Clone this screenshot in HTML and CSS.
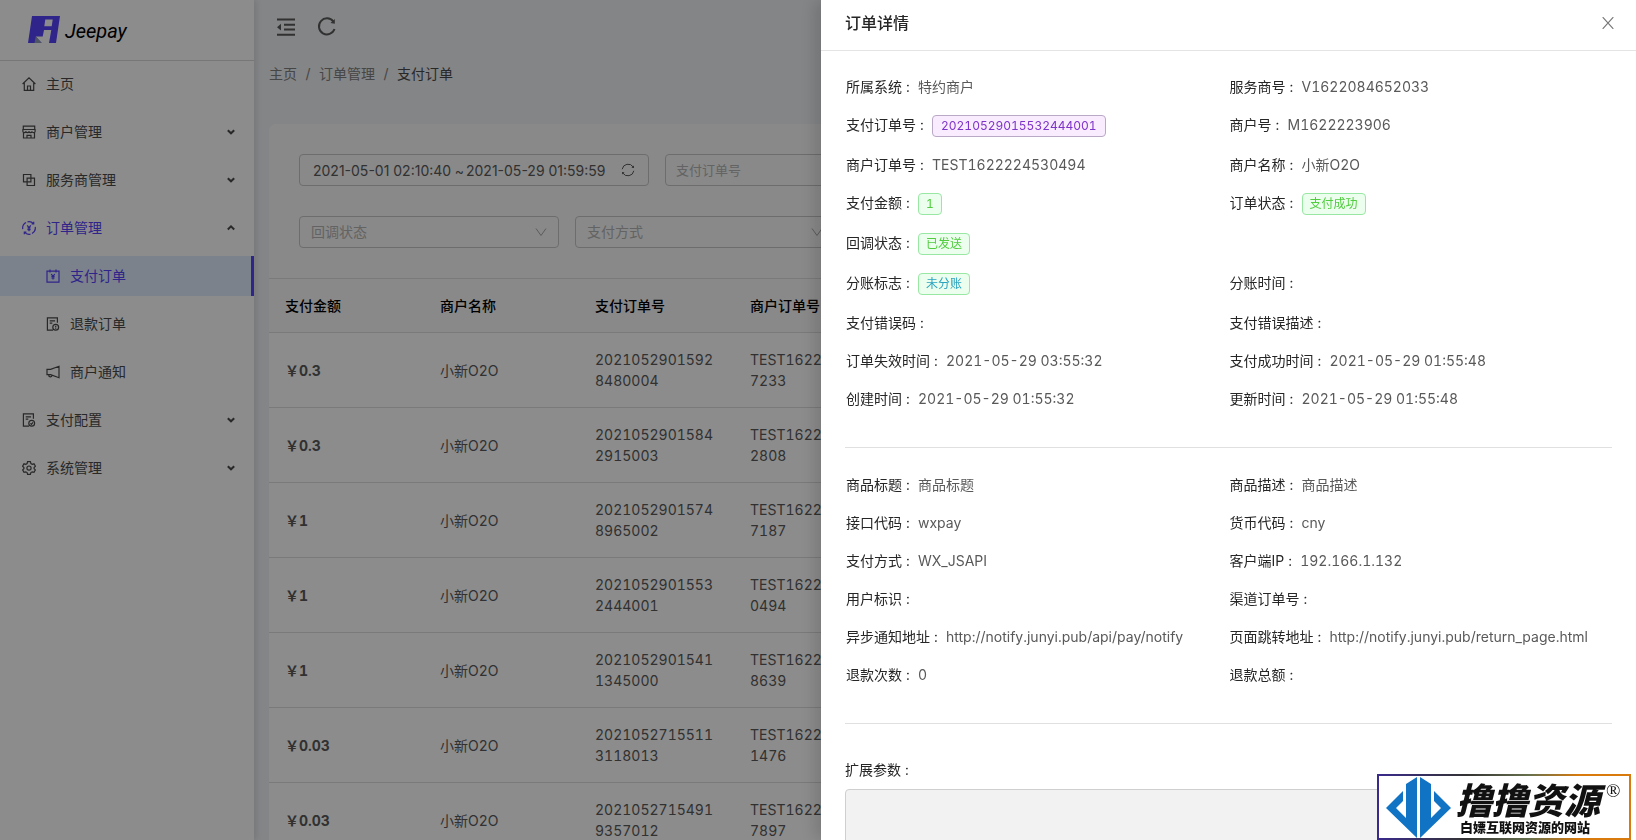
FILE: index.html
```html
<!DOCTYPE html>
<html lang="zh-CN">
<head>
<meta charset="utf-8">
<title>Jeepay</title>
<link rel="stylesheet" href="styles.css">
</head>
<body>
<div class="app">
  <aside class="sidebar">
    <a class="brand" href="#">
      <svg class="brand-mark" viewBox="0 0 32 27" aria-hidden="true">
        <path fill="#5742fa" fill-rule="evenodd" d="M4 0h28l-4 27h-7l2.300-13H16l-1.300 6.500h-7l6 6.500H0zM17.300 3.500l-1 6.700h7.400l1-6.700z"/>
        <path fill="#8f9bb5" d="M7.700 20.500l6 6.500H6.500z"/>
      </svg>
      <span class="brand-name">Jeepay</span>
    </a>
    <nav class="menu">
      <a class="menu-item" href="#">
        <svg class="icon" viewBox="0 0 14 14"><path d="M.6 7 7 .9 13.400 7M2.300 6v7.300h9.400V6M5.500 13V9h3v4"/></svg>
        <span class="menu-text">主页</span>
      </a>
      <a class="menu-item" href="#">
        <svg class="icon" viewBox="0 0 14 14"><path d="M1.300 1.200h11.400v3.300H1.300zM.9 4.500h12.200v2c0 1.600-2.700 1.600-3 0-.4 1.600-2.700 1.600-3.100 0-.4 1.600-2.700 1.600-3.100 0-.4 1.600-3 1.600-3 0zM1.500 8v5h11V8M5 13v-2.700h4V13"/></svg>
        <span class="menu-text">商户管理</span>
        <svg class="arrow" viewBox="0 0 8 6"><path d="m.8 1.200 3.200 3.100 3.200-3.100"/></svg>
      </a>
      <a class="menu-item" href="#">
        <svg class="icon" viewBox="0 0 14 14"><path d="M1.500 1.500h7.400v7.400H1.500zM5.100 5.100h7.400v7.400H5.100z"/></svg>
        <span class="menu-text">服务商管理</span>
        <svg class="arrow" viewBox="0 0 8 6"><path d="m.8 1.200 3.200 3.100 3.200-3.100"/></svg>
      </a>
      <a class="menu-item menu-item-open" href="#">
        <svg class="icon" viewBox="0 0 14 14"><path d="M.8 8.200A6.300 6.300 0 0 1 4 1.500M5.500.9a6.300 6.300 0 0 1 6 1.700M13.200 5.800A6.300 6.300 0 0 1 10 12.500M8.500 13.100a6.300 6.300 0 0 1-6-1.700M11.700.8v2H9.600M2.300 13.200v-2h2.100M5.200 4.300 7 6.700l1.800-2.400M7 6.700v3.500M5.400 7h3.200M5.400 8.600h3.200"/></svg>
        <span class="menu-text">订单管理</span>
        <svg class="arrow arrow-up" viewBox="0 0 8 6"><path d="M.8 4.500 4 1.400l3.200 3.100"/></svg>
      </a>
      <a class="menu-item menu-sub menu-item-active" href="#">
        <svg class="icon" viewBox="0 0 14 14"><path d="M1 2.200h12v10.900H1zM4 .6v3M10 .6v3M5.200 5l1.800 2.400L8.800 5M7 7.400v3.200M5.400 7.500h3.200M5.400 9h3.200"/></svg>
        <span class="menu-text">支付订单</span>
      </a>
      <a class="menu-item menu-sub" href="#">
        <svg class="icon" viewBox="0 0 14 14"><path d="M7 13.200H1.400V.8h10v5M3.700 3.800h5.400M3.700 6.200h2.600"/><circle cx="9.700" cy="10.300" r="2.900"/><path d="M9.700 8.700v1.900M9.700 11.200v.7"/></svg>
        <span class="menu-text">退款订单</span>
      </a>
      <a class="menu-item menu-sub" href="#">
        <svg class="icon" viewBox="0 0 14 14"><path d="M13 1.300v11.400L4.600 9.600H1V4.400h3.600zM2.700 9.700c-.2 2.700 3.100 2.800 3.300.6"/></svg>
        <span class="menu-text">商户通知</span>
      </a>
      <a class="menu-item" href="#">
        <svg class="icon" viewBox="0 0 14 14"><path d="M7 13.200H1.400V.8h10v5M3.700 3.800h5.400M3.700 6.200h2.600"/><circle cx="9.700" cy="10.300" r="2.900"/><path d="m8.400 10.300 1 1 1.600-2"/></svg>
        <span class="menu-text">支付配置</span>
        <svg class="arrow" viewBox="0 0 8 6"><path d="m.8 1.200 3.200 3.100 3.200-3.100"/></svg>
      </a>
      <a class="menu-item" href="#">
        <svg class="icon" viewBox="0 0 14 14"><path d="M5.600.7h2.800l.5 1.800 1.300.8 1.800-.5 1.400 2.400L12.100 6.500v1.200l1.300 1.200-1.400 2.400-1.800-.5-1.300.8-.5 1.800H5.600l-.5-1.800-1.300-.8-1.800.5L.6 8.900l1.300-1.200V6.500L.6 5.200 2 2.800l1.800.5 1.300-.8z"/><circle cx="7" cy="7.100" r="2.100"/></svg>
        <span class="menu-text">系统管理</span>
        <svg class="arrow" viewBox="0 0 8 6"><path d="m.8 1.200 3.200 3.100 3.200-3.100"/></svg>
      </a>
    </nav>
  </aside>

  <main class="main">
    <header class="toolbar">
      <button class="tool" type="button" aria-label="收起菜单">
        <svg class="tool-icon" viewBox="0 0 20 20"><path d="M1 2.500h18M8 7.800h11M8 12.600h11M1 17.800h18"/><path class="solid" d="M5 6.800v6.800L1 10.200z"/></svg>
      </button>
      <button class="tool" type="button" aria-label="刷新">
        <svg class="tool-icon" viewBox="0 0 20 20"><path d="M17.500 12A8 8 0 1 1 16.300 4.500"/><path class="solid" d="M17.800 2v4.700l-4.300-.8z"/></svg>
      </button>
    </header>
    <nav class="breadcrumb">
      <a class="crumb" href="#">主页</a><span class="crumb-sep">/</span><a class="crumb" href="#">订单管理</a><span class="crumb-sep">/</span><span class="crumb-current">支付订单</span>
    </nav>

    <section class="card">
      <form class="filters">
        <div class="filter-row">
          <div class="range">
            <input class="range-input" type="text" aria-label="开始时间" value="2021-05-01 02:10:40">
            <span class="range-sep">~</span>
            <input class="range-input" type="text" aria-label="结束时间" value="2021-05-29 01:59:59">
            <svg class="range-icon" viewBox="0 0 14 14"><path d="M1.200 6.200A6 6 0 0 1 12.200 4M12.800 7.800A6 6 0 0 1 1.800 10"/><path class="solid" d="M13 2.400v2.700l-2.600-.4zM1 11.600V8.900l2.600.4z"/></svg>
          </div>
          <input class="field" type="text" aria-label="支付订单号" placeholder="支付订单号">
        </div>
        <div class="filter-row">
          <div class="select-box">
            <select class="select" aria-label="回调状态"><option>回调状态</option></select>
            <svg class="select-arrow" viewBox="0 0 12 10"><path d="m1 1.500 5 7 5-7"/></svg>
          </div>
          <div class="select-box">
            <select class="select" aria-label="支付方式"><option>支付方式</option></select>
            <svg class="select-arrow" viewBox="0 0 12 10"><path d="m1 1.500 5 7 5-7"/></svg>
          </div>
        </div>
      </form>
      <table class="orders">
        <colgroup><col class="col"><col class="col"><col class="col"><col></colgroup>
        <thead><tr><th>支付金额</th><th>商户名称</th><th>支付订单号</th><th>商户订单号</th></tr></thead>
        <tbody>
          <tr><td class="amount">￥0.3</td><td>小新O2O</td><td>2021052901592<br>8480004</td><td>TEST1622<br>7233</td></tr>
          <tr><td class="amount">￥0.3</td><td>小新O2O</td><td>2021052901584<br>2915003</td><td>TEST1622<br>2808</td></tr>
          <tr><td class="amount">￥1</td><td>小新O2O</td><td>2021052901574<br>8965002</td><td>TEST1622<br>7187</td></tr>
          <tr><td class="amount">￥1</td><td>小新O2O</td><td>2021052901553<br>2444001</td><td>TEST1622<br>0494</td></tr>
          <tr><td class="amount">￥1</td><td>小新O2O</td><td>2021052901541<br>1345000</td><td>TEST1622<br>8639</td></tr>
          <tr><td class="amount">￥0.03</td><td>小新O2O</td><td>2021052715511<br>3118013</td><td>TEST1622<br>1476</td></tr>
          <tr><td class="amount">￥0.03</td><td>小新O2O</td><td>2021052715491<br>9357012</td><td>TEST1622<br>7897</td></tr>
        </tbody>
      </table>
    </section>
  </main>
</div>

<div class="mask"></div>

<section class="drawer" role="dialog" aria-labelledby="drawer-title">
  <header class="drawer-head">
    <h2 class="drawer-title" id="drawer-title">订单详情</h2>
    <button class="close" type="button" aria-label="关闭">
      <svg class="close-icon" viewBox="0 0 12 12"><path d="M.7.200 11.300 11.800M11.300.200.7 11.800"/></svg>
    </button>
  </header>
  <div class="drawer-body">
    <dl class="details">
      <div class="detail"><dt>所属系统</dt><dd>特约商户</dd></div>
      <div class="detail"><dt>服务商号</dt><dd>V1622084652033</dd></div>
      <div class="detail"><dt>支付订单号</dt><dd><span class="tag tag-purple">20210529015532444001</span></dd></div>
      <div class="detail"><dt>商户号</dt><dd>M1622223906</dd></div>
      <div class="detail"><dt>商户订单号</dt><dd>TEST1622224530494</dd></div>
      <div class="detail"><dt>商户名称</dt><dd>小新O2O</dd></div>
      <div class="detail"><dt>支付金额</dt><dd><span class="tag tag-green">1</span></dd></div>
      <div class="detail"><dt>订单状态</dt><dd><span class="tag tag-green">支付成功</span></dd></div>
      <div class="detail detail-wide"><dt>回调状态</dt><dd><span class="tag tag-green">已发送</span></dd></div>
      <div class="detail"><dt>分账标志</dt><dd><span class="tag tag-green tag-blue-text">未分账</span></dd></div>
      <div class="detail"><dt>分账时间</dt><dd></dd></div>
      <div class="detail"><dt>支付错误码</dt><dd></dd></div>
      <div class="detail"><dt>支付错误描述</dt><dd></dd></div>
      <div class="detail"><dt>订单失效时间</dt><dd>2021-05-29 03:55:32</dd></div>
      <div class="detail"><dt>支付成功时间</dt><dd>2021-05-29 01:55:48</dd></div>
      <div class="detail"><dt>创建时间</dt><dd>2021-05-29 01:55:32</dd></div>
      <div class="detail"><dt>更新时间</dt><dd>2021-05-29 01:55:48</dd></div>
    </dl>
    <hr class="divider">
    <dl class="details">
      <div class="detail"><dt>商品标题</dt><dd>商品标题</dd></div>
      <div class="detail"><dt>商品描述</dt><dd>商品描述</dd></div>
      <div class="detail"><dt>接口代码</dt><dd>wxpay</dd></div>
      <div class="detail"><dt>货币代码</dt><dd>cny</dd></div>
      <div class="detail"><dt>支付方式</dt><dd>WX_JSAPI</dd></div>
      <div class="detail"><dt>客户端IP</dt><dd>192.166.1.132</dd></div>
      <div class="detail"><dt>用户标识</dt><dd></dd></div>
      <div class="detail"><dt>渠道订单号</dt><dd></dd></div>
      <div class="detail"><dt>异步通知地址</dt><dd>http://notify.junyi.pub/api/pay/notify</dd></div>
      <div class="detail"><dt>页面跳转地址</dt><dd>http://notify.junyi.pub/return_page.html</dd></div>
      <div class="detail"><dt>退款次数</dt><dd>0</dd></div>
      <div class="detail"><dt>退款总额</dt><dd></dd></div>
    </dl>
    <hr class="divider">
    <div class="extra">
      <label class="extra-label" for="ext">扩展参数</label>
      <textarea class="extra-input" id="ext" disabled></textarea>
    </div>
  </div>
</section>

<aside class="badge">
  <svg class="badge-logo" viewBox="0 0 65 61" aria-hidden="true">
    <path fill="#1173c4" d="M0 31l17-17v10l-7 7 10 10V7l11-7v61zM65 31L48 14v10l7 7-10 10V7L34 0v61z"/>
  </svg>
  <div class="badge-text">
    <div class="badge-top"><span class="badge-name">撸撸资源</span><span class="badge-reg">®</span></div>
    <span class="badge-line">白嫖互联网资源的网站</span>
  </div>
</aside>
</body>
</html>
```

FILE: styles.css
```css
*, *::before, *::after { box-sizing: border-box; }

body {
  margin: 0;
  height: 100vh;
  overflow: hidden;
  background: #f0f2f5;
  color: #595959;
  font-family: Inter, "Noto Sans CJK SC", sans-serif;
  font-size: 14px;
  line-height: 21px;
  font-variant-numeric: tabular-nums;
}

a { color: inherit; text-decoration: none; }
input, select, textarea, button { font: inherit; color: inherit; }
svg { display: block; flex: none; fill: none; stroke: currentColor; }
.solid { fill: currentColor; stroke: none; }

.app { display: flex; height: 100vh; overflow: hidden; }

/* sidebar */
.sidebar {
  flex: none;
  width: 254px;
  background: #fff;
  box-shadow: 2px 0 6px rgba(0, 21, 41, 0.12);
  z-index: 1;
}
.brand {
  display: flex;
  align-items: center;
  gap: 5px;
  height: 61px;
  padding: 0 28px 2px;
  border-bottom: 1px solid #d9d9d9;
}
.brand-mark { width: 32px; height: 27px; stroke: none; }
.brand-name {
  padding-top: 4px;
  color: #000;
  font-family: Roboto, sans-serif;
  font-size: 20px;
  font-style: italic;
  line-height: 24px;
}
.menu { display: flex; flex-direction: column; gap: 8px; padding-top: 3px; }
.menu-item {
  display: flex;
  align-items: center;
  gap: 10px;
  height: 40px;
  padding: 0 19px 1px 22px;
  color: #4a4a4a;
}
.menu-text { flex: 1; }
.icon { width: 14px; height: 14px; stroke-width: 1.2; }
.arrow { width: 8px; height: 6px; stroke-width: 2; }
.menu-item-open { color: #5742fa; }
.arrow-up { color: #4a4a4a; }
.menu-sub { padding-left: 46px; }
.menu-item-active {
  padding-right: 16px;
  border-right: 3px solid #5742fa;
  background: #e0edff;
  color: #5742fa;
}

/* main column */
.main { flex: 1; min-width: 0; padding: 0 15px; }
.toolbar { display: flex; gap: 21px; height: 54px; padding: 16px 7px; }
.tool { padding: 0; border: 0; background: none; }
.tool-icon { width: 20px; height: 20px; stroke-width: 2; }
.breadcrumb { display: flex; padding: 9px 0 40px; color: #808080; }
.crumb-sep { width: 22px; text-align: center; }
.crumb-current { color: #4a4a4a; }

.card { border-radius: 8px 8px 0 0; background: #fff; overflow: hidden; }
.filters {
  display: flex;
  flex-direction: column;
  gap: 30px;
  padding: 30px;
  background: #fafafa;
}
.filter-row { display: flex; gap: 16px; }
.range, .field, .select {
  height: 32px;
  border: 1px solid #c6c6c6;
  border-radius: 4px;
  background: transparent;
}
.range {
  display: flex;
  align-items: center;
  width: 350px;
  padding: 0 13px;
  font-variant-numeric: normal;
}
.range-input { width: 140px; padding: 0; border: 0; background: none; }
.range-sep { width: 13px; text-align: center; }
.range-icon { width: 14px; height: 14px; margin-left: auto; }
.field { width: 260px; padding: 0 10px; font-size: 13px; }
.field::placeholder { color: #b4b4b4; }
.select-box { display: grid; align-items: center; width: 260px; }
.select {
  grid-area: 1 / 1;
  width: 100%;
  padding: 0 11px 2px;
  color: #b4b4b4;
  appearance: none;
}
.select-arrow {
  grid-area: 1 / 1;
  justify-self: end;
  width: 12px;
  height: 10px;
  margin-right: 12px;
  color: #a6a6a6;
  pointer-events: none;
}

.orders {
  width: 100%;
  border-collapse: separate;
  border-spacing: 0;
  border-top: 1px solid #dedede;
  table-layout: fixed;
}
.col { width: 155px; }
.orders th, .orders td { padding: 16px; border-bottom: 1px solid #dedede; text-align: left; }
.orders th { background: #fafafa; color: #000; font-weight: 500; }
.orders .amount { font-weight: 700; }

/* overlay */
.mask { position: fixed; inset: 0; z-index: 2; background: rgba(0, 0, 0, 0.45); }

/* drawer */
.drawer {
  position: fixed;
  z-index: 3;
  top: 0;
  right: 0;
  bottom: 0;
  width: calc(50% - 3px);
  overflow: hidden;
  background: #fff;
  box-shadow: -6px 0 16px rgba(0, 0, 0, 0.15);
}
.drawer-head {
  display: flex;
  align-items: center;
  justify-content: space-between;
  height: 51px;
  padding: 0 22px 4px 24px;
  border-bottom: 1px solid #e4e4e4;
}
.drawer-title { margin: 0; color: #262626; font-size: 16px; font-weight: 500; line-height: 24px; }
.close { padding: 0; border: 0; background: none; color: #757575; }
.close-icon { width: 12px; height: 12px; stroke-width: 1.2; }
.drawer-body { padding: 25px 24px; }
.details { display: grid; grid-template-columns: 1fr 1fr; margin: 0; line-height: 22px; }
.detail { display: flex; padding: 0 0 16px 1px; white-space: nowrap; }
.detail-wide { grid-column: 1 / -1; }
.detail dt { color: #262626; }
.detail dt::after, .extra-label::after { content: ":"; display: inline-block; width: 16px; padding-left: 4px; }
.detail dd { margin: 0; }
.tag {
  display: block;
  height: 22px;
  margin: 1px 0;
  padding: 0 7px;
  border: 1px solid;
  border-radius: 4px;
  font-size: 12px;
  line-height: 20px;
}
.tag-purple { padding: 0 8px; border-color: #b9a9c6; background: #f9ecff; color: #7f34c9; }
.tag-green { border-color: #98e8a4; background: #ecffee; color: #50cc3e; }
.tag-blue-text { color: #2ba3bf; }
.divider { height: 1px; margin: 21px 0 26px; border: 0; background: #e0e0e0; }
.extra { display: flex; flex-direction: column; gap: 8px; padding-top: 9px; }
.extra-label { color: #262626; line-height: 22px; }
.extra-input {
  width: 100%;
  height: 100px;
  border: 1px solid #cfcfcf;
  border-radius: 4px;
  background: #f2f2f2;
  resize: none;
}

/* floating badge */
.badge {
  position: fixed;
  z-index: 4;
  right: 5px;
  bottom: 0;
  display: flex;
  gap: 5px;
  width: 254px;
  height: 66px;
  padding: 1px 7px;
  border: 2px solid;
  border-image: linear-gradient(90deg, #3b2a8c, #333 35%, #66704d 60%, #d97b0c 80%, #d97b0c) 1;
  background: #fff;
  color: #111;
  font-family: "Noto Sans CJK SC", sans-serif;
  font-weight: 900;
}
.badge-logo { width: 65px; height: 61px; stroke: none; }
.badge-text { display: flex; flex-direction: column; }
.badge-top { display: flex; gap: 6px; height: 42px; }
.badge-name { font-size: 36px; font-style: italic; line-height: 42px; }
.badge-reg { font-family: "Liberation Serif", serif; font-size: 19px; font-weight: 400; line-height: 28px; }
.badge-line { padding-left: 4px; font-size: 13px; line-height: 16px; }
```
